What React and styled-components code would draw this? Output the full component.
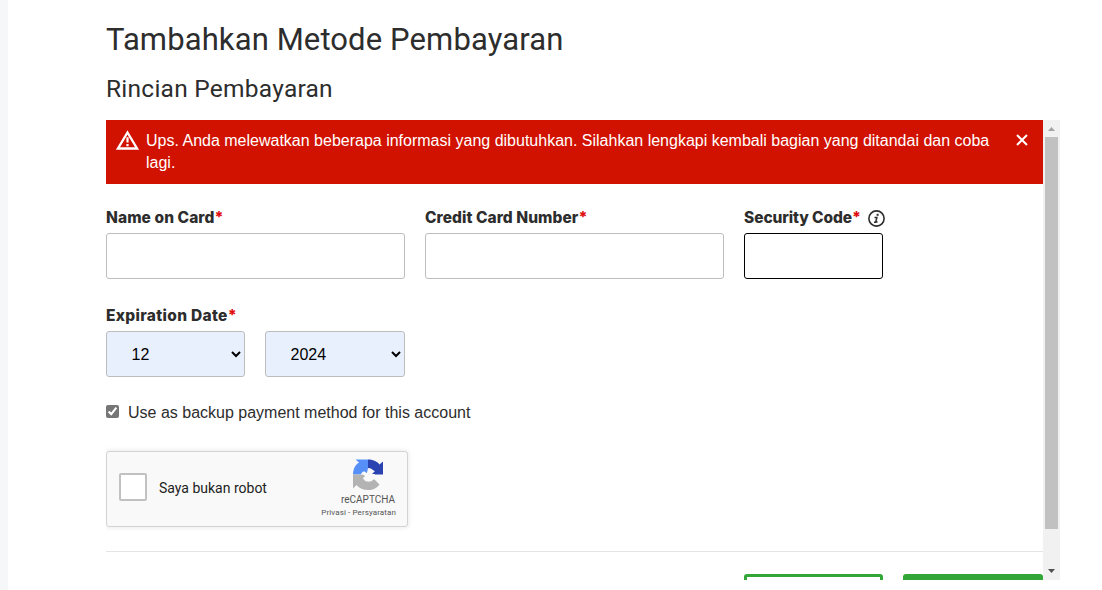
import React from "react";
import styled, { createGlobalStyle } from "styled-components";

const GlobalStyle = createGlobalStyle`
  * { box-sizing: border-box; }
  body { margin: 0; background: #fff; color: #2d2d2d; font: 16px/22px "Liberation Sans", Arial, sans-serif; }
`;

const Page = styled.main`
  height: 590px;
  overflow: hidden;
  border-left: 8px solid #f6f7f9;
  padding: 20px 42px 10px 98px;
`;

const Title = styled.h1`
  margin: 0;
  height: 40px;
  font: 400 31px/40px Roboto, sans-serif;
  letter-spacing: 0.11px;
  white-space: nowrap;
`;

const Subtitle = styled.h2`
  margin: 12px 0 0;
  height: 48px;
  font: 400 24.5px/34px Roboto, sans-serif;
  letter-spacing: 0.25px;
  white-space: nowrap;
`;

const Panel = styled.section`
  display: flex;
  width: 954px;
  height: 460px;
  overflow: hidden;
`;

const Content = styled.form`
  width: 937px;
  flex: none;
`;

const Alert = styled.div`
  display: flex;
  height: 64px;
  padding: 10px 14px 10px 10px;
  background: #d21200;
  color: #fff;
`;

const AlertText = styled.p`
  margin: 0 0 0 7px;
  width: 860px;
`;

const AlertClose = styled.button`
  margin-left: auto;
  padding: 0;
  border: 0;
  width: 14px;
  height: 22px;
  background: none;
  color: #fff;
  display: flex;
  align-items: center;
  justify-content: center;
`;

const Fields = styled.div`
  display: flex;
  gap: 20px;
  margin-top: ${(p) => p.$top}px;
`;

const Field = styled.div`
  width: ${(p) => p.$width}px;
`;

const Label = styled.label`
  display: flex;
  height: 27px;
  font: 800 15.5px/24px Inter, sans-serif;
  letter-spacing: ${(p) => p.$spacing || 0}px;
  white-space: nowrap;
`;

const Required = styled.span`
  color: #e00a0a;
  letter-spacing: 0;
`;

const InfoIcon = styled.svg`
  margin: 4px 0 0 7px;
  flex: none;
`;

const Input = styled.input`
  display: block;
  width: 100%;
  height: 46px;
  padding: 0 12px;
  border: 1px solid ${(p) => (p.$active ? "#000" : "#bdbdbd")};
  border-radius: 3px;
  background: #fff;
  outline: none;
`;

const Select = styled.select`
  width: ${(p) => p.$width}px;
  height: 46px;
  padding: 0 1px 0 20.5px;
  border: 1px solid #bdbdbd;
  border-radius: 3px;
  background-color: #e8f0fe;
  color: #000;
  font: 16px "Liberation Sans", Arial, sans-serif;
`;

const CheckRow = styled.label`
  display: flex;
  align-items: center;
  height: 22px;
  margin-top: 25px;
  gap: 9px;
`;

const Checkbox = styled.input`
  width: 13px;
  height: 13px;
  margin: 0 0 3px;
  accent-color: #767676;
`;

const Captcha = styled.div`
  display: flex;
  align-items: center;
  width: 302px;
  height: 76px;
  margin-top: 27px;
  padding: 0 10px 0 12px;
  border: 1px solid #d3d3d3;
  border-radius: 3px;
  background: #f9f9f9;
  box-shadow: 0 0 4px 1px rgba(0, 0, 0, 0.08);
  font-family: Roboto, sans-serif;
`;

const CaptchaBox = styled.span`
  width: 28px;
  height: 28px;
  margin-bottom: 4px;
  border: 2px solid #c1c1c1;
  border-radius: 2px;
  background: #fff;
`;

const CaptchaText = styled.span`
  margin: 0 0 2px 12px;
  font-size: 14px;
  line-height: 17px;
  color: #222;
`;

const CaptchaBrand = styled.div`
  display: flex;
  flex-direction: column;
  align-items: flex-end;
  height: 66px;
  margin-left: auto;
  color: #555;
`;

const CaptchaLogo = styled.svg`
  margin: 3px 14px 0 0;
`;

const BrandName = styled.span`
  margin: 3px 2px 0 0;
  font-size: 10px;
  line-height: 13px;
`;

const BrandLinks = styled.span`
  margin-right: 1px;
  font-size: 8px;
  line-height: 13px;
  letter-spacing: 0.1px;
  white-space: pre;
`;

const Footer = styled.div`
  display: flex;
  justify-content: flex-end;
  gap: 20px;
  margin-top: 24px;
  padding-top: 22px;
  border-top: 1px solid #e5e5e5;
`;

const Button = styled.button`
  width: ${(p) => p.$width}px;
  height: 46px;
  border: 3px solid #33a638;
  border-radius: 3px;
  background: ${(p) => (p.$filled ? "#33a638" : "#fff")};
`;

const Scrollbar = styled.div`
  display: flex;
  flex-direction: column;
  align-items: center;
  width: 17px;
  background: #f1f1f1;
`;

const ScrollArrow = styled.svg`
  flex: none;
`;

const ScrollThumb = styled.div`
  width: 13px;
  height: 392px;
  margin-bottom: 34px;
  background: #c1c1c1;
`;

function WarningIcon() {
  return (
    <svg width="23" height="22" viewBox="0 0 23 22">
      <path d="M11.5 2.5 21 18.5H2Z" fill="none" stroke="#fff" strokeWidth="2.3" />
      <path d="M11.5 7.3v5.3M11.5 14v2.2" stroke="#fff" strokeWidth="2.2" />
    </svg>
  );
}

function Recaptcha() {
  return (
    <CaptchaLogo width="30" height="31" viewBox="0 0 60 62">
      <path fill="#2a43b0" d="M30 1c9 0 18 3 23 10l7-6v26H37l7-7-14-4Z" />
      <path fill="#558ff7" d="M30 1H5l7 6C4 12 0 21 0 31h20l2-7 5 5 3-4Z" />
      <path fill="#b3b3b3" d="M0 31v28l7-7c6 7 13 10 23 10 11 0 18-4 23-11L42 40c-3 4-8 6-13 5-5 0-8-4-9-7l8-7Z" />
      <path fill="#f9f9f9" d="m20 25 8 3 2-10 6 1 6 5-6 6h8l-2 10-7 4-8-2 1-5-8-6h-5Z" />
    </CaptchaLogo>
  );
}

function TextField({ label, width, spacing, active, info }) {
  return (
    <Field $width={width}>
      <Label $spacing={spacing}>
        {label}<Required>*</Required>
        {info && (
          <InfoIcon width="17" height="17" viewBox="0 0 17 17">
            <circle cx="8.5" cy="8.5" r="7.6" fill="none" stroke="#2d2d2d" strokeWidth="1.6" />
            <path d="M9.6 3.8v2" stroke="#2d2d2d" strokeWidth="2" />
            <path d="M6.5 7.5h2.4l-1.2 4.6h1.9M6 12.2h2" fill="none" stroke="#2d2d2d" strokeWidth="1.5" />
          </InfoIcon>
        )}
      </Label>
      <Input $active={active} aria-label={label} />
    </Field>
  );
}

export default function App() {
  return (
    <Page>
      <GlobalStyle />
      <Title>Tambahkan Metode Pembayaran</Title>
      <Subtitle>Rincian Pembayaran</Subtitle>
      <Panel>
        <Content>
          <Alert>
            <WarningIcon />
            <AlertText>
              Ups. Anda melewatkan beberapa informasi yang dibutuhkan. Silahkan lengkapi kembali bagian yang ditandai dan coba lagi.
            </AlertText>
            <AlertClose type="button" aria-label="Tutup">
              <svg width="12" height="14" viewBox="0 0 12 14">
                <path d="m1 1 10 10M11 1 1 11" stroke="currentColor" strokeWidth="2" />
              </svg>
            </AlertClose>
          </Alert>
          <Fields $top={22}>
            <TextField label="Name on Card" width={299} spacing={0.08} />
            <TextField label="Credit Card Number" width={299} spacing={0.06} />
            <TextField label="Security Code" width={139} spacing={-0.08} active info />
          </Fields>
          <Fields $top={25}>
            <Field $width={299}>
              <Label $spacing={0.33}>Expiration Date<Required>*</Required></Label>
              <Fields $top={0}>
                <Select $width={139} defaultValue="12" aria-label="Month"><option>12</option></Select>
                <Select $width={140} defaultValue="2024" aria-label="Year"><option>2024</option></Select>
              </Fields>
            </Field>
          </Fields>
          <CheckRow>
            <Checkbox type="checkbox" defaultChecked />
            Use as backup payment method for this account
          </CheckRow>
          <Captcha>
            <CaptchaBox />
            <CaptchaText>Saya bukan robot</CaptchaText>
            <CaptchaBrand>
              <Recaptcha />
              <BrandName>reCAPTCHA</BrandName>
              <BrandLinks>Privasi - Persyaratan</BrandLinks>
            </CaptchaBrand>
          </Captcha>
          <Footer>
            <Button type="button" $width={139} aria-label="Batal" />
            <Button type="button" $width={140} $filled aria-label="Simpan" />
          </Footer>
        </Content>
        <Scrollbar>
          <ScrollArrow width="17" height="17"><path d="M5 11h7L8.5 7Z" fill="#a3a3a3" /></ScrollArrow>
          <ScrollThumb />
          <ScrollArrow width="17" height="17"><path d="M5 6h7l-3.5 4Z" fill="#505050" /></ScrollArrow>
        </Scrollbar>
      </Panel>
    </Page>
  );
}
